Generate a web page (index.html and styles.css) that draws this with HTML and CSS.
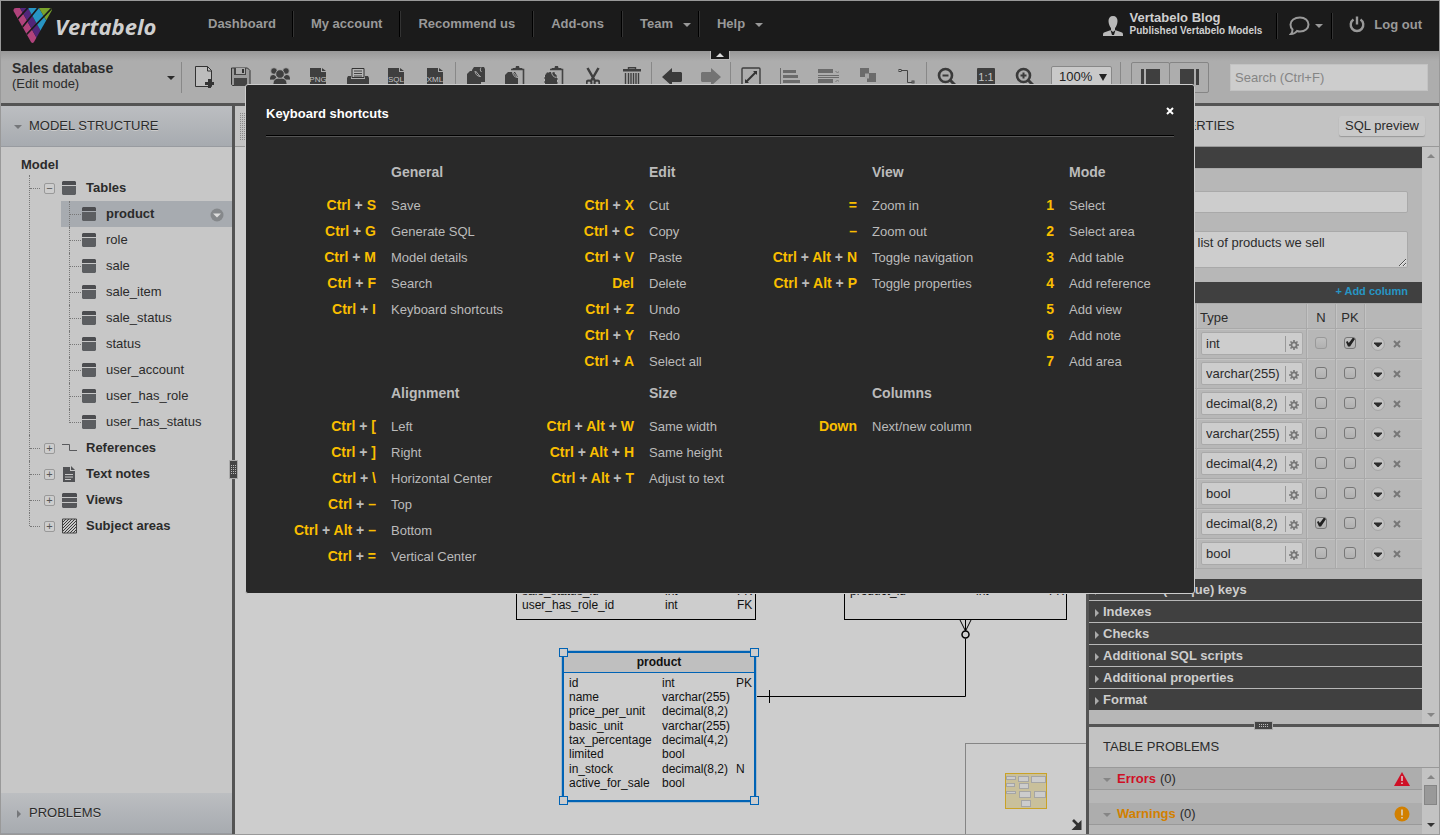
FILE: index.html
```html
<!DOCTYPE html>
<html lang="en">
<head>
<meta charset="utf-8">
<title>Sales database - Vertabelo</title>
<link rel="stylesheet" href="styles.css">
</head>
<body>
<svg class="defs" width="0" height="0" aria-hidden="true">
  <symbol id="i-table" viewBox="0 0 14 14"><path d="M1 0h12l1 1v3H0V1z" fill="#4c4d50"/><path d="M0 5h14v8l-1 1H1l-1-1z" fill="#5c5e61"/></symbol>
  <symbol id="i-gear" viewBox="0 0 10 10"><circle cx="5" cy="5" r="2.6" fill="none" stroke="#777" stroke-width="1.8"/><path d="M5 0v2M5 8v2M0 5h2M8 5h2M1.500 1.500l1.300 1.300M7.200 7.200l1.300 1.300M8.500 1.500L7.200 2.800M2.800 7.200L1.500 8.500" stroke="#777" stroke-width="1.600"/></symbol>
  <symbol id="i-x" viewBox="0 0 8 8"><path d="M1 1l6 6M7 1L1 7" stroke="currentColor" stroke-width="2"/></symbol>
  <symbol id="i-more" viewBox="0 0 14 14"><circle cx="7" cy="7" r="6.400" fill="#c3c3c3" stroke="#a2a2a2"/><path d="M3 5.500h8v1L7.500 10h-1L3 6.500z" fill="#2b2b2b"/></symbol>
</svg>

<div class="app">
  <header class="topbar">
    <a class="logo" href="#">
      <svg width="39" height="36" viewBox="0 0 39 36" aria-hidden="true">
        <clipPath id="v"><path d="M3 0h33q4 0 2.500 3L21 34q-1.500 2-3 0L.5 3Q0 0 3 0z"/></clipPath>
        <g clip-path="url(#v)">
          <path d="M-4 0H7l20 36H0z" fill="#b1437c"/>
          <path d="M7 0h8l20 36h-8z" fill="#52267a"/>
          <path d="M15 0h11l16 28v8h-7z" fill="#2795c4"/>
          <path d="M26 0h14v24z" fill="#79a32c"/>
          <path d="M16 -1.500L2 14M26.500 -2L7 22M39 0L13 27" stroke="#1b1b1b" stroke-width="1.700"/>
        </g>
      </svg>
      <span>Vertabelo</span>
    </a>
    <nav class="nav">
      <a href="#">Dashboard</a>
      <a href="#">My account</a>
      <a href="#">Recommend us</a>
      <a href="#">Add-ons</a>
      <a href="#" class="drop drop-tight">Team</a>
      <a href="#" class="drop">Help</a>
    </nav>
    <div class="account">
      <svg width="20" height="21" viewBox="0 0 20 21" aria-hidden="true"><path d="M10 0c3 0 4.500 2 4.500 5S13 11 12 12v2l7 2.500c1 .5 1 1.500 1 3.500H0c0-2 0-3 1-3.500L8 14v-2C7 11 5.500 8 5.500 5S7 0 10 0z" fill="#b9b9b9"/><path d="M7.500 14l2.500 2 2.500-2-1.500 5H9z" fill="#1b1b1b"/></svg>
      <div class="who"><strong>Vertabelo Blog</strong><small>Published Vertabelo Models</small></div>
    </div>
    <button class="chat" aria-label="Messages">
      <svg width="21" height="20" viewBox="0 0 21 20"><path d="M11 1.500c5 0 8.500 3 8.500 7s-3.500 7-8.500 7c-1 0-2-.1-3-.5-1.500 2-3.500 3-6 3 1.500-1.500 1.500-3 1.500-4.500C2 12 1.500 10.500 1.500 8.500c0-4 4-7 9.500-7z" fill="none" stroke="#999" stroke-width="2"/></svg>
      <i class="caret"></i>
    </button>
    <a class="logout" href="#">
      <svg width="16" height="17" viewBox="0 0 16 17" aria-hidden="true"><path d="M4.500 3.500a6.300 6.300 0 1 0 7 0M8 .5v8" fill="none" stroke="#999" stroke-width="2.400"/></svg>
      Log out
    </a>
    <button class="collapse" aria-label="Collapse header"><i></i></button>
  </header>

  <div class="toolbar">
    <button class="model"><span><strong>Sales database</strong>(Edit mode)</span><i class="caret dark"></i></button>
    <div class="group">
      <button aria-label="Add table"><svg class="new" width="20" height="24" viewBox="0 0 20 24"><path d="M.500 1.500h12l4 4v16H.500z" fill="#bdbdbd" stroke="#333"/><path d="M12.500 1.500V6h4" fill="none" stroke="#333"/><path d="M14.500 14v9M10 18.500h9" stroke="#333" stroke-width="3"/></svg></button>
      <button aria-label="Save"><svg width="20" height="20" viewBox="0 0 20 20"><path d="M1.500 1h15L19 3.500V18.500H1.500L.500 17.500V1z" fill="#9a9a9a" stroke="#333"/><path d="M3 1h12v7H3z" fill="#444"/><path d="M5 1h9v6H5z" fill="#aaa"/><path d="M11 2h2v4h-2z" fill="#333"/><path d="M3 11h13v8H3z" fill="#444"/></svg></button>
      <button aria-label="Share"><svg width="20" height="20" viewBox="0 0 20 20" fill="#3f3f3f" stroke="#adadad" stroke-width=".8"><circle cx="4" cy="4" r="3.300"/><circle cx="16" cy="4" r="3.300"/><path d="M-.5 13c0-4 1.500-5.500 4.500-5.500L7 10l-2 3zM20.500 13c0-4-1.500-5.500-4.500-5.500L13 10l2 3z"/><path d="M3 18c0-5 2-7 7-7s7 2 7 7z"/><circle cx="10" cy="7" r="4.300"/></svg></button>
      <button aria-label="Export PNG"><svg width="17" height="20" viewBox="0 0 17 20"><path d="M0 1h11v4h5v14H0zM12 1l4 3h-4z" fill="#3f3f3f"/><text x="8" y="15" class="fmt">PNG</text></svg></button>
      <button aria-label="Print"><svg width="22" height="20" viewBox="0 0 22 20"><path d="M5 1.500h12v9H5z" fill="#b5b5b5" stroke="#333"/><path d="M7 4h8M7 6.500h8M7 9h8" stroke="#444"/><path d="M1 9h3v3h14V9h3l1 2v7H0v-7z" fill="#3f3f3f"/></svg></button>
      <button aria-label="Generate SQL"><svg width="17" height="20" viewBox="0 0 17 20"><path d="M0 1h11v4h5v14H0zM12 1l4 3h-4z" fill="#3f3f3f"/><text x="8" y="15" class="fmt">SQL</text></svg></button>
      <button aria-label="Export XML"><svg width="17" height="20" viewBox="0 0 17 20"><path d="M0 1h11v4h5v14H0zM12 1l4 3h-4z" fill="#3f3f3f"/><text x="8" y="15" class="fmt">XML</text></svg></button>
    </div>
    <div class="group">
      <button aria-label="Copy"><svg width="20" height="22" viewBox="0 0 20 22"><path d="M6 4l2-3h10l1 2v13H6z" fill="#3f3f3f"/><path d="M1 8l3-3h8l3 5v11H1z" fill="#3f3f3f"/><path d="M9 5c.5 3 1.500 5 5.500 5.500M15 1.500c-1 2-1 3 .5 4.500M9.500 5l5 6" fill="none" stroke="#aaa"/></svg></button>
      <button aria-label="Paste"><svg width="20" height="22" viewBox="0 0 20 22"><path d="M6 3.500h12.500V20H13" fill="none" stroke="#444" stroke-width="1.600"/><path d="M7 3.500L8 2h2.500L11 0h3l.5 2H17l1 1.500z" fill="#3f3f3f"/><path d="M0 9l3-3h7l3 5v11H0z" fill="#3f3f3f"/><path d="M7.500 6c.5 3 1.500 5 5 5.500M8 6l5 6" fill="none" stroke="#aaa"/></svg></button>
      <button aria-label="Paste special"><svg width="20" height="22" viewBox="0 0 20 22"><path d="M6 3.500h12.500V20H14" fill="none" stroke="#444" stroke-width="1.600"/><path d="M7 3.500L8 2h2.500L11 0h3l.5 2H17l1 1.500z" fill="#3f3f3f"/><path d="M.5 9l3-3h7l3 5v11H.5z" fill="#3f3f3f" stroke="#bbb" stroke-dasharray="2 2"/><path d="M7.500 6c.5 3 1.500 5 5 5.500" fill="none" stroke="#aaa"/></svg></button>
      <button aria-label="Cut"><svg width="14" height="20" viewBox="0 0 14 20"><path d="M1.500 1L9 14M12.500 1L5 14" stroke="#3f3f3f" stroke-width="2.500"/><circle cx="3" cy="16" r="2.500" fill="none" stroke="#3f3f3f" stroke-width="2"/><circle cx="11" cy="16" r="2.500" fill="none" stroke="#3f3f3f" stroke-width="2"/></svg></button>
      <button aria-label="Delete"><svg width="18" height="20" viewBox="0 0 18 20"><path d="M5.500 2.500V.700h7v1.800M2.500 6v13h13V6M5.500 6v12M8 6v12M10.500 6v12M13 6v12" fill="none" stroke="#3f3f3f" stroke-width="1.400"/><path d="M0 2h18v2.500H0z" fill="#3f3f3f"/></svg></button>
    </div>
    <div class="group">
      <button aria-label="Undo"><svg width="20" height="18" viewBox="0 0 20 18"><path d="M0 9l10-9v4h9l1 1v8l-1 1h-9v4z" fill="#3a3a3a"/></svg></button>
      <button aria-label="Redo"><svg width="20" height="18" viewBox="0 0 20 18"><path d="M20 9L10 0v4H1L0 5v8l1 1h9v4z" fill="#737373"/></svg></button>
    </div>
    <div class="group">
      <button aria-label="Fit"><svg width="20" height="20" viewBox="0 0 20 20"><rect x="1" y="1" width="18" height="18" rx="1" fill="none" stroke="#3f3f3f" stroke-width="1.400"/><path d="M5 15L15 5" stroke="#333" stroke-width="2"/><path d="M16 4v4l-4-4zM4 16v-4l4 4z" fill="#333"/></svg></button>
      <button aria-label="Align"><svg width="20" height="20" viewBox="0 0 20 20" fill="#6b6b6b"><path d="M0 1h1v18H0zM3 3h13v3H3zM3 8h15v3H3zM3 13h17v3H3z"/></svg></button>
      <button aria-label="Size"><svg width="21" height="20" viewBox="0 0 21 20" fill="#6b6b6b"><path d="M0 2h15v4H0zM0 8h21v1H0zM0 10h21v1H0zM0 12h15v4H0z"/><path d="M17.500 4l2 2 2-2M17.500 15l2-2 2 2" fill="none" stroke="#777"/></svg></button>
      <button aria-label="Order"><svg width="17" height="20" viewBox="0 0 17 20"><path d="M1 1h9v9H1z" fill="#6b6b6b"/><path d="M8 6h9v9H8z" fill="#6b6b6b"/><path d="M6 6.500h4v5H6z" fill="#a5a5a5"/></svg></button>
      <button aria-label="Line style"><svg width="18" height="20" viewBox="0 0 18 20"><path d="M3 3.500h6.500v12H14" fill="none" stroke="#444"/><rect x="1" y="2.500" width="2" height="2" fill="none" stroke="#444"/><rect x="14" y="14" width="2" height="2" fill="none" stroke="#444"/></svg></button>
    </div>
    <div class="group">
      <button aria-label="Zoom out"><svg width="20" height="20" viewBox="0 0 20 20" fill="none" stroke="#3a3a3a"><circle cx="8.500" cy="8.500" r="6.500" stroke-width="2.600"/><path d="M13 13l6 6" stroke-width="3"/><path d="M5.500 8.500h6" stroke-width="2"/></svg></button>
      <button aria-label="Actual size"><svg width="20" height="20" viewBox="0 0 20 20"><rect x="1" y="1" width="18" height="18" rx="1" fill="#3f3f3f"/><text x="10" y="14" class="one">1:1</text></svg></button>
      <button aria-label="Zoom in"><svg width="20" height="20" viewBox="0 0 20 20" fill="none" stroke="#3a3a3a"><circle cx="8.500" cy="8.500" r="6.500" stroke-width="2.600"/><path d="M13 13l6 6" stroke-width="3"/><path d="M5.500 8.500h6M8.500 5.500v6" stroke-width="2"/></svg></button>
    </div>
    <div class="zoom-box"><select class="zoom" aria-label="Zoom"><option>100%</option></select><i></i></div>
    <div class="panels">
      <button aria-label="Toggle navigation"><svg width="19" height="16" viewBox="0 0 19 16" fill="#3f3f3f"><path d="M0 0h3v16H0zM5 0h14v16H5z"/></svg></button><button aria-label="Toggle properties"><svg width="19" height="16" viewBox="0 0 19 16" fill="#3f3f3f"><path d="M16 0h3v16h-3zM0 0h14v16H0z"/></svg></button>
    </div>
    <input class="search" type="search" placeholder="Search (Ctrl+F)" aria-label="Search">
  </div>

  <main class="workspace">
    <aside class="sidebar">
      <h2 class="side-head open">MODEL STRUCTURE</h2>
      <div class="tree">
        <div class="root">Model</div>
        <ul class="level1">
          <li>
            <div class="node"><button class="tog" aria-label="Collapse">&minus;</button><svg width="16" height="14" viewBox="0 0 16 14"><use href="#i-table" width="14" height="14"/></svg>Tables</div>
            <ul class="level2">
              <li class="sel"><svg width="14" height="14"><use href="#i-table"/></svg>product<svg class="pick" width="14" height="14" viewBox="0 0 14 14"><circle cx="7" cy="7" r="6.500" fill="#85888b"/><path d="M3 5.500h8L7 9.500z" fill="#ddd"/></svg></li>
              <li><svg width="14" height="14"><use href="#i-table"/></svg>role</li>
              <li><svg width="14" height="14"><use href="#i-table"/></svg>sale</li>
              <li><svg width="14" height="14"><use href="#i-table"/></svg>sale_item</li>
              <li><svg width="14" height="14"><use href="#i-table"/></svg>sale_status</li>
              <li><svg width="14" height="14"><use href="#i-table"/></svg>status</li>
              <li><svg width="14" height="14"><use href="#i-table"/></svg>user_account</li>
              <li><svg width="14" height="14"><use href="#i-table"/></svg>user_has_role</li>
              <li><svg width="14" height="14"><use href="#i-table"/></svg>user_has_status</li>
            </ul>
          </li>
          <li><div class="node"><button class="tog" aria-label="Expand">+</button><svg width="16" height="14" viewBox="0 0 16 14"><path d="M0 3.500h7.500v6H15" fill="none" stroke="#58595c"/></svg>References</div></li>
          <li><div class="node"><button class="tog" aria-label="Expand">+</button><svg width="16" height="16" viewBox="0 0 16 16"><path d="M1 1h7v4h5v11H1zM9 0l4 4H9z" fill="#515255"/><path d="M3 8.500h8M3 11h8M3 13.500h6" stroke="#c7c7c7"/></svg>Text notes</div></li>
          <li><div class="node"><button class="tog" aria-label="Expand">+</button><svg width="16" height="16" viewBox="0 0 16 16"><path d="M1 1h13l1 1v3H0V2z" fill="#4c4d50"/><path d="M0 6h15v4H0zM0 11h15v4l-1 1H1l-1-1z" fill="#56575a"/></svg>Views</div></li>
          <li><div class="node"><button class="tog" aria-label="Expand">+</button><svg width="16" height="16" viewBox="0 0 16 16"><path d="M1 4l3-3M1 7l6-6M1 10l9-9M1 13l12-12M2 15L15 2M5 15L15 5M8 15l7-7M11 15l4-4M14 15l1-1" stroke="#3a3a3a"/><path d="M.500 1h14v14H.500z" fill="none" stroke="#444"/></svg>Subject areas</div></li>
        </ul>
      </div>
      <h2 class="side-head">PROBLEMS</h2>
    </aside>
    <div class="split"><i></i></div>

    <section class="canvas">
      <div class="canvas-bar"><i class="grip"></i></div>
      <div class="diagram">
        <svg class="links" width="851" height="687" viewBox="0 0 851 687" fill="none" stroke="#000" aria-hidden="true">
          <path d="M520 549.500h210.500V491.500M534.500 543v13M730.500 473v10M725 473l5.500 11L736 473"/><circle cx="730.500" cy="487.500" r="3.500" stroke-width="1.500"/>
        </svg>
        <div class="entity e-sale">
          <table><tr><td>sale_status_id</td><td>int</td><td>FK</td></tr><tr><td>user_has_role_id</td><td>int</td><td>FK</td></tr></table>
        </div>
        <div class="entity e-item">
          <table><tr><td>product_id</td><td>int</td><td>FK</td></tr></table>
        </div>
        <div class="entity e-product">
          <h3>product</h3>
          <table>
            <tr><td>id</td><td>int</td><td>PK</td></tr>
            <tr><td>name</td><td>varchar(255)</td><td></td></tr>
            <tr><td>price_per_unit</td><td>decimal(8,2)</td><td></td></tr>
            <tr><td>basic_unit</td><td>varchar(255)</td><td></td></tr>
            <tr><td>tax_percentage</td><td>decimal(4,2)</td><td></td></tr>
            <tr><td>limited</td><td>bool</td><td></td></tr>
            <tr><td>in_stock</td><td>decimal(8,2)</td><td>N</td></tr>
            <tr><td>active_for_sale</td><td>bool</td><td></td></tr>
          </table>
          <i class="h tl"></i><i class="h tr"></i><i class="h bl"></i><i class="h br"></i>
        </div>
        <div class="minimap">
          <svg width="120" height="90" viewBox="0 0 120 90">
            <rect x="39.500" y="29.500" width="41" height="35" fill="#c9c09b" stroke="#c9a227"/>
            <g fill="#ccc" stroke="#a5a5a5"><rect x="40.500" y="32.500" width="9" height="3"/><rect x="52.500" y="32.500" width="10" height="5"/><rect x="65.500" y="32.500" width="14" height="6"/><rect x="40.500" y="39.500" width="8" height="3"/><rect x="53.500" y="39.500" width="9" height="5"/><rect x="40.500" y="47.500" width="9" height="2"/><rect x="53.500" y="47.500" width="11" height="6"/><rect x="68.500" y="47.500" width="11" height="6"/><rect x="55.500" y="56.500" width="9" height="6"/></g>
            <path d="M107 76l6 6" stroke="#333" stroke-width="2.600"/><path d="M115.500 76v10h-10z" fill="#333"/>
          </svg>
        </div>
      </div>
    </section>
    <div class="split"><i></i></div>

    <aside class="props">
      <div class="props-head"><h2>TABLE PROPERTIES</h2><button>SQL preview</button></div>
      <div class="scroller props-scroll">
        <div class="props-body">
          <div class="bar"></div>
          <div class="fields">
            <input type="text" aria-label="Name">
            <textarea aria-label="Description">The whole list of products we sell</textarea>
          </div>
          <div class="bar"><button class="add">+ Add column</button></div>
          <table class="cols">
            <colgroup><col><col class="c-type"><col class="c-box"><col class="c-box"><col class="c-act"></colgroup>
            <thead><tr><th></th><th class="left">Type</th><th>N</th><th>PK</th><th></th></tr></thead>
            <tbody>
              <tr><td></td><td><span class="type"><input value="int" aria-label="Type"><svg><use href="#i-gear"/></svg></span></td><td><input type="checkbox" disabled aria-label="N"></td><td><input type="checkbox" checked aria-label="PK"></td><td><span class="acts"><svg width="14" height="14"><use href="#i-more"/></svg><svg width="8" height="8"><use href="#i-x"/></svg></span></td></tr>
              <tr><td></td><td><span class="type"><input value="varchar(255)" aria-label="Type"><svg><use href="#i-gear"/></svg></span></td><td><input type="checkbox" aria-label="N"></td><td><input type="checkbox" aria-label="PK"></td><td><span class="acts"><svg width="14" height="14"><use href="#i-more"/></svg><svg width="8" height="8"><use href="#i-x"/></svg></span></td></tr>
              <tr><td></td><td><span class="type"><input value="decimal(8,2)" aria-label="Type"><svg><use href="#i-gear"/></svg></span></td><td><input type="checkbox" aria-label="N"></td><td><input type="checkbox" aria-label="PK"></td><td><span class="acts"><svg width="14" height="14"><use href="#i-more"/></svg><svg width="8" height="8"><use href="#i-x"/></svg></span></td></tr>
              <tr><td></td><td><span class="type"><input value="varchar(255)" aria-label="Type"><svg><use href="#i-gear"/></svg></span></td><td><input type="checkbox" aria-label="N"></td><td><input type="checkbox" aria-label="PK"></td><td><span class="acts"><svg width="14" height="14"><use href="#i-more"/></svg><svg width="8" height="8"><use href="#i-x"/></svg></span></td></tr>
              <tr><td></td><td><span class="type"><input value="decimal(4,2)" aria-label="Type"><svg><use href="#i-gear"/></svg></span></td><td><input type="checkbox" aria-label="N"></td><td><input type="checkbox" aria-label="PK"></td><td><span class="acts"><svg width="14" height="14"><use href="#i-more"/></svg><svg width="8" height="8"><use href="#i-x"/></svg></span></td></tr>
              <tr><td></td><td><span class="type"><input value="bool" aria-label="Type"><svg><use href="#i-gear"/></svg></span></td><td><input type="checkbox" aria-label="N"></td><td><input type="checkbox" aria-label="PK"></td><td><span class="acts"><svg width="14" height="14"><use href="#i-more"/></svg><svg width="8" height="8"><use href="#i-x"/></svg></span></td></tr>
              <tr><td></td><td><span class="type"><input value="decimal(8,2)" aria-label="Type"><svg><use href="#i-gear"/></svg></span></td><td><input type="checkbox" checked aria-label="N"></td><td><input type="checkbox" aria-label="PK"></td><td><span class="acts"><svg width="14" height="14"><use href="#i-more"/></svg><svg width="8" height="8"><use href="#i-x"/></svg></span></td></tr>
              <tr><td></td><td><span class="type"><input value="bool" aria-label="Type"><svg><use href="#i-gear"/></svg></span></td><td><input type="checkbox" aria-label="N"></td><td><input type="checkbox" aria-label="PK"></td><td><span class="acts"><svg width="14" height="14"><use href="#i-more"/></svg><svg width="8" height="8"><use href="#i-x"/></svg></span></td></tr>
            </tbody>
          </table>
          <div class="sections">
            <button>Alternate (unique) keys</button>
            <button>Indexes</button>
            <button>Checks</button>
            <button>Additional SQL scripts</button>
            <button>Additional properties</button>
            <button>Format</button>
          </div>
        </div>
        <div class="sbar"><i class="up"></i><i class="down"></i></div>
      </div>
      <div class="hsplit"><i></i></div>
      <div class="probs">
        <div class="probs-head"><h2>TABLE PROBLEMS</h2></div>
        <div class="scroller">
          <div class="probs-body">
            <div class="prob"><strong class="err">Errors</strong> (0)
              <svg width="16" height="14" viewBox="0 0 16 14"><path d="M8 0l8 14H0z" fill="#cf1026"/><path d="M8 4v5M8 10.500v1.500" stroke="#ddd" stroke-width="1.400"/></svg></div>
            <div class="prob"><strong class="warn">Warnings</strong> (0)
              <svg width="16" height="16" viewBox="0 0 16 16"><circle cx="8" cy="8" r="7.500" fill="#d28000"/><path d="M8 3.500v6M8 11v1.500" stroke="#ddd" stroke-width="1.400"/></svg></div>
          </div>
          <div class="sbar"><i class="up"></i><b></b><i class="down on"></i></div>
        </div>
      </div>
    </aside>
  </main>
</div>

<div class="overlay">
  <div class="modal" role="dialog" aria-labelledby="mt">
    <header><h1 id="mt">Keyboard shortcuts</h1><button aria-label="Close"><svg width="8" height="8"><use href="#i-x"/></svg></button></header>
    <div class="keys">
      <section><h2>General</h2><dl>
        <dt><kbd>Ctrl</kbd> + <kbd>S</kbd></dt><dd>Save</dd>
        <dt><kbd>Ctrl</kbd> + <kbd>G</kbd></dt><dd>Generate SQL</dd>
        <dt><kbd>Ctrl</kbd> + <kbd>M</kbd></dt><dd>Model details</dd>
        <dt><kbd>Ctrl</kbd> + <kbd>F</kbd></dt><dd>Search</dd>
        <dt><kbd>Ctrl</kbd> + <kbd>I</kbd></dt><dd>Keyboard shortcuts</dd>
      </dl></section>
      <section><h2>Edit</h2><dl>
        <dt><kbd>Ctrl</kbd> + <kbd>X</kbd></dt><dd>Cut</dd>
        <dt><kbd>Ctrl</kbd> + <kbd>C</kbd></dt><dd>Copy</dd>
        <dt><kbd>Ctrl</kbd> + <kbd>V</kbd></dt><dd>Paste</dd>
        <dt><kbd>Del</kbd></dt><dd>Delete</dd>
        <dt><kbd>Ctrl</kbd> + <kbd>Z</kbd></dt><dd>Undo</dd>
        <dt><kbd>Ctrl</kbd> + <kbd>Y</kbd></dt><dd>Redo</dd>
        <dt><kbd>Ctrl</kbd> + <kbd>A</kbd></dt><dd>Select all</dd>
      </dl></section>
      <section><h2>View</h2><dl>
        <dt><kbd>=</kbd></dt><dd>Zoom in</dd>
        <dt><kbd>–</kbd></dt><dd>Zoom out</dd>
        <dt><kbd>Ctrl</kbd> + <kbd>Alt</kbd> + <kbd>N</kbd></dt><dd>Toggle navigation</dd>
        <dt><kbd>Ctrl</kbd> + <kbd>Alt</kbd> + <kbd>P</kbd></dt><dd>Toggle properties</dd>
      </dl></section>
      <section><h2>Mode</h2><dl>
        <dt><kbd>1</kbd></dt><dd>Select</dd>
        <dt><kbd>2</kbd></dt><dd>Select area</dd>
        <dt><kbd>3</kbd></dt><dd>Add table</dd>
        <dt><kbd>4</kbd></dt><dd>Add reference</dd>
        <dt><kbd>5</kbd></dt><dd>Add view</dd>
        <dt><kbd>6</kbd></dt><dd>Add note</dd>
        <dt><kbd>7</kbd></dt><dd>Add area</dd>
      </dl></section>
      <section><h2>Alignment</h2><dl>
        <dt><kbd>Ctrl</kbd> + <kbd>[</kbd></dt><dd>Left</dd>
        <dt><kbd>Ctrl</kbd> + <kbd>]</kbd></dt><dd>Right</dd>
        <dt><kbd>Ctrl</kbd> + <kbd>\</kbd></dt><dd>Horizontal Center</dd>
        <dt><kbd>Ctrl</kbd> + <kbd>–</kbd></dt><dd>Top</dd>
        <dt><kbd>Ctrl</kbd> + <kbd>Alt</kbd> + <kbd>–</kbd></dt><dd>Bottom</dd>
        <dt><kbd>Ctrl</kbd> + <kbd>=</kbd></dt><dd>Vertical Center</dd>
      </dl></section>
      <section><h2>Size</h2><dl>
        <dt><kbd>Ctrl</kbd> + <kbd>Alt</kbd> + <kbd>W</kbd></dt><dd>Same width</dd>
        <dt><kbd>Ctrl</kbd> + <kbd>Alt</kbd> + <kbd>H</kbd></dt><dd>Same height</dd>
        <dt><kbd>Ctrl</kbd> + <kbd>Alt</kbd> + <kbd>T</kbd></dt><dd>Adjust to text</dd>
      </dl></section>
      <section><h2>Columns</h2><dl>
        <dt><kbd>Down</kbd></dt><dd>Next/new column</dd>
      </dl></section>
    </div>
  </div>
</div>
</body>
</html>
```
FILE: styles.css
```css
* { box-sizing: border-box; }
body { margin: 0; font: 13px/16px "Liberation Sans", Arial, sans-serif; color: #2b2b2b; background: #cdcdcd; }
button, input, select, textarea { font: inherit; color: inherit; margin: 0; }
button { background: none; border: 0; padding: 0; }
h1, h2, h3, ul, dl, dd { margin: 0; padding: 0; font-size: 13px; }
ul { list-style: none; }
a { color: inherit; text-decoration: none; }
svg { display: block; flex: none; }
.defs { position: absolute; }

.app { height: 100vh; display: flex; flex-direction: column; border: 1px solid #999; overflow: hidden; }

/* Top bar */
.topbar { position: relative; flex: none; height: 50px; display: flex; align-items: center; background: #1b1b1b; color: #999; font-weight: bold; }
.logo { width: 179px; padding-left: 12px; display: flex; align-items: center; gap: 3px; font: italic bold 22px/36px "Open Sans", sans-serif; color: #cfcfcf; }
.nav { display: flex; padding-bottom: 4px; }
.nav a { line-height: 16px; padding: 5px 18px 5px 16px; box-shadow: inset -1px 0 #000; display: flex; align-items: center; border-right: 1px solid #333; height: 26px; }
.nav a + a { padding-left: 17px; }
.nav a:first-child { padding-left: 28px; padding-right: 17px; }
.nav a:last-child { border: 0; box-shadow: none; }
.nav .drop::after { content: ""; margin: 2px 0 0 10px; border: 4px solid transparent; border-top-color: #999; border-bottom: 0; }
.nav .drop-tight { padding-right: 8px; }
.caret { border: 4px solid transparent; border-top-color: #999; border-bottom: 0; }
.caret.dark { border-top-color: #2b2b2b; }
.account { margin-left: auto; display: flex; align-items: center; gap: 7px; padding-right: 14px; }
.who { display: flex; flex-direction: column; color: #cfcfcf; padding-bottom: 5px; }
.who strong { line-height: 15px; }
.who small { font-size: 10px; line-height: 12px; }
.chat { height: 26px; display: flex; align-items: center; gap: 5px; padding: 0 8px 0 12px; border-left: 1px solid #000; border-right: 1px solid #000; box-shadow: inset 1px 0 #333, 1px 0 #333; }
.logout { display: flex; align-items: center; gap: 9px; padding: 0 17px 3px; }
.collapse { position: absolute; z-index: 1; top: 50px; left: 50%; width: 20px; height: 9px; margin-left: -10px; background: #1b1b1b; border: solid #bbb; border-width: 0 1px 1px; display: flex; justify-content: center; align-items: center; }
.collapse i { border: 4px solid transparent; border-bottom-color: #ddd; border-top: 0; }

/* Tool bar */
.toolbar { flex: none; height: 55px; display: flex; align-items: center; background: linear-gradient(#989898, #adadad 10px); border-bottom: 3px solid #545454; }
.model { width: 180px; padding: 0 6px 2px 11px; display: flex; justify-content: space-between; align-items: center; text-align: left; }
.model span { line-height: 15px; }
.model strong { display: block; font-size: 14px; }
.model .caret { margin-top: 4px; }
.group { display: flex; border-left: 1px solid #888; height: 31px; }
.group button { width: 39px; display: flex; justify-content: center; align-items: center; }
.group .new { margin-left: 6px; }
.fmt, .one { font: 8px/8px "Liberation Sans Narrow", "Liberation Sans", sans-serif; fill: #c3c3c3; text-anchor: middle; }
.one { font-size: 11px; }
.zoom-box { position: relative; margin-left: 7px; }
.zoom-box i { position: absolute; right: 5px; top: 8px; border: 4px solid transparent; border-top: 7px solid #222; border-bottom: 0; pointer-events: none; }
.zoom { appearance: none; display: block; width: 61px; height: 22px; padding: 0 7px; border: 1px solid #888; border-radius: 2px; background: #c9c9c9; color: #222; }
.panels { display: flex; margin-left: 8px; padding-left: 10px; border-left: 1px solid #888; }
.panels button { width: 39px; height: 31px; border: 1px solid #858585; border-radius: 2px; display: flex; align-items: center; justify-content: center; }
.panels button + button { margin-left: -1px; width: 40px; }
.search { appearance: none; width: 198px; height: 27px; margin: 0 11px 0 auto; padding: 0 4px; border: 1px solid #c3c3c3; background: #cdcdcd; }
.search::placeholder { color: #858585; opacity: 1; }

/* Workspace */
.workspace { flex: 1; min-height: 0; display: flex; }
.split { position: relative; flex: none; width: 3px; background: #545454; }
.split i, .hsplit i { position: absolute; background: repeating-linear-gradient(#454545 0 1px, transparent 1px 2px) content-box, repeating-linear-gradient(90deg, #bbb 0 1px, #454545 1px 2px) content-box, #454545; outline: 1px solid #aaa; }
.split i { top: 50%; left: -2px; width: 7px; height: 17px; margin-top: -9px; padding: 3px 1px 3px 1px; }

.sidebar { flex: none; width: 231px; display: flex; flex-direction: column; background: #c7c7c7; }
.side-head { height: 41px; padding-left: 28px; display: flex; align-items: center; font-weight: normal; color: #2b2b2b; background: linear-gradient(#bcbec1, #a7abb0); border-bottom: 1px solid #989ba0; position: relative; text-shadow: 0 1px #ccc; }
.side-head::before { content: ""; position: absolute; left: 16px; top: 17px; border: 4px solid transparent; border-left-color: #75777a; border-right: 0; }
.side-head.open::before { left: 13px; top: 19px; border: 4px solid transparent; border-top-color: #75777a; border-bottom: 0; }
.tree { flex: 1; padding-top: 5px; overflow: hidden; }
.root { height: 23px; line-height: 26px; padding-left: 20px; font-weight: bold; }
.level1 { margin-left: 28px; }
.level1 > li { position: relative; border-left: 1px dotted #777; }
.level1 > li:last-child { border-color: transparent; }
.level1 > li:last-child::before { content: ""; position: absolute; left: -1px; top: 0; height: 13px; border-left: 1px dotted #777; }
.node { height: 26px; display: flex; align-items: center; gap: 8px; font-weight: bold; }
.node::before { content: ""; width: 10px; margin-right: -4px; border-top: 1px dotted #777; }
.tog { width: 11px; height: 11px; border: 1px solid #999; border-radius: 2px; background: #cdcdcd; color: #555; font: 11px/9px "Liberation Sans", sans-serif; margin-right: -1px; }
.level2 { margin-left: 31px; }
.level2 li { position: relative; height: 26px; display: flex; align-items: center; gap: 10px; padding-left: 21px; }
.level2 li::before { content: ""; position: absolute; left: 8px; top: 0; width: 11px; height: 13px; border: dotted #777; border-width: 0 0 1px 1px; }
.level2 li:not(:last-child)::after { content: ""; position: absolute; left: 8px; top: 13px; height: 13px; border-left: 1px dotted #777; }
.level2 .sel { background: #a7abb0; font-weight: bold; }
.pick { margin: 2px 8px 0 auto; }

/* Canvas */
.canvas { flex: 1; min-width: 0; display: flex; flex-direction: column; background: #cdcdcd; }
.canvas-bar { flex: none; height: 41px; background: #c3c3c3; border-bottom: 1px solid #999; padding: 6px 5px; }
.grip { display: block; width: 5px; height: 28px; background: repeating-linear-gradient(#c3c3c3 0 1px, transparent 1px 2px), repeating-linear-gradient(90deg, #888 0 1px, #c3c3c3 1px 2px); }
.diagram { flex: 1; position: relative; overflow: hidden; }
.links { position: absolute; left: 0; top: 0; }
.entity { position: absolute; border: 1px solid #000; font-size: 12px; line-height: 14px; color: #111; }
.entity table { border-collapse: collapse; table-layout: fixed; width: 100%; }
.entity td { padding: 0; white-space: nowrap; }
.e-sale { left: 281px; top: 435px; width: 240px; padding: 1px 2px 7px 5px; }
.e-sale td:first-child { width: 143px; }
.e-sale td:nth-child(2) { width: 72px; }
.e-item { left: 609px; top: 435px; width: 223px; padding: 1px 2px 21px 5px; }
.e-item td:first-child { width: 126px; }
.e-item td:nth-child(2) { width: 73px; }
.e-product { left: 327px; top: 504px; width: 194px; border: 2px solid #0063b5; padding-bottom: 10px; box-shadow: 0 0 0 1px #a3b8c9; }
.e-product h3 { line-height: 19px; font-size: 12px; text-align: center; background: #bfbfbf; border-bottom: 1px solid #0063b5; }
.e-product table { margin: 3px 0 0 5px; width: 185px; }
.e-product td:first-child { width: 93px; }
.e-product td:nth-child(2) { width: 74px; }
.e-product tr:nth-child(3n) td { line-height: 15px; }
.h { position: absolute; width: 9px; height: 9px; border: 1px solid #0063b5; background: #cdcdcd; }
.tl, .tr { top: -5px; }
.bl, .br { bottom: -5px; }
.tl, .bl { left: -5px; }
.tr, .br { right: -5px; }
.minimap { position: absolute; right: 0; bottom: 0; border: 1px solid #858585; border-width: 1px 0 0 1px; background: #cdcdcd; }

/* Properties */
.props { flex: none; width: 350px; display: flex; flex-direction: column; background: #b7b7b7; min-height: 0; }
.props h2 { font-weight: normal; }
.props-head { flex: none; height: 41px; padding: 0 14px 1px 18px; display: flex; align-items: center; justify-content: space-between; background: #c3c3c3; border-bottom: 1px solid #999; }
.props-head button { height: 20px; padding: 0 6px; background: #c9c9c9; border-radius: 2px; box-shadow: 0 1px 1px #999; }
.scroller { display: flex; flex: 1; min-height: 0; overflow: hidden; }
.props-body, .probs-body { flex: 1; min-width: 0; }
.bar { height: 22px; padding-right: 14px; display: flex; justify-content: flex-end; align-items: center; background: #404040; border-bottom: 1px solid #aaa; }
.add { color: #2795c4; font-size: 11px; font-weight: bold; padding-bottom: 3px; }
.fields { padding: 22px 14px 14px; display: flex; flex-direction: column; gap: 18px; }
.fields input { height: 22px; }
.fields input, .fields textarea { width: 100%; border: 1px solid #a9a9a9; border-radius: 2px; background: #cdcdcd; padding: 3px 5px; }
.fields textarea { height: 37px; padding-left: 30px; }
.cols { width: 100%; table-layout: fixed; border-collapse: separate; border-spacing: 0; }
.c-type { width: 110px; }
.c-box { width: 29px; }
.c-act { width: 57px; }
.cols th { height: 25px; font-weight: normal; padding: 3px 0 0; }
.cols .left { text-align: left; padding-left: 3px; }
.cols td { height: 30px; padding: 0; text-align: center; }
.cols th, .cols td { border-bottom: 1px solid #a9a9a9; box-shadow: inset 1px 1px #c3c3c3; border-right: 1px solid #a9a9a9; }
.cols th { box-shadow: inset 1px 0 #c3c3c3; }
.cols th:last-child, .cols td:last-child { border-right: 0; }
.type { margin: 0 3px 0 4px; height: 23px; display: flex; align-items: center; background: #cdcdcd; border: 1px solid #a9a9a9; border-radius: 2px; }
.type input { flex: 1; width: 0; height: 16px; border: 0; border-right: 1px solid #999; padding: 0 0 0 4px; background: none; }
.type svg { width: 10px; height: 10px; margin: 2px 3px 0; }
input[type=checkbox] { appearance: none; display: block; width: 12px; height: 12px; margin: 0 auto 2px; border: 1px solid #777; border-radius: 3px; background: linear-gradient(#bfbfbf, #b0b0b0); }
input[type=checkbox]:disabled { border-color: #999; }
input[type=checkbox]:checked::before { content: ""; display: block; height: 10px; background: #222; clip-path: polygon(10% 45%, 25% 35%, 38% 55%, 80% 0, 100% 15%, 50% 90%, 30% 90%); }
.acts { display: flex; align-items: center; gap: 8px; padding: 1px 0 0 6px; color: #777; }
.sections { margin-top: 10px; }
.sections button { display: flex; align-items: center; gap: 4px; width: 100%; height: 22px; padding-left: 6px; background: #404040; color: #cdcdcd; font-weight: bold; border-bottom: 1px solid #b7b7b7; }
.sections button::before { content: ""; margin-top: 2px; border: 4px solid transparent; border-left-color: #aaa; border-right: 0; }
.sbar { flex: none; width: 17px; background: #c3c3c3; display: flex; flex-direction: column; align-items: center; padding: 7px 0; }
.sbar i { border: 4px solid transparent; }
.sbar .up { border-bottom-color: #858585; border-top: 0; }
.sbar .down { border-top-color: #858585; border-bottom: 0; margin-top: auto; }
.sbar .down.on { border-top-color: #333; }
.sbar b { width: 13px; height: 20px; margin-top: 6px; background: #999; border: 1px solid #858585; }
.hsplit { position: relative; flex: none; height: 3px; background: #545454; }
.hsplit i { left: 50%; top: -2px; width: 17px; height: 7px; margin-left: -9px; padding: 1px 4px; }
.probs { flex: none; height: 107px; display: flex; flex-direction: column; }
.probs-head { flex: none; height: 41px; padding: 12px 14px; background: #c3c3c3; border-bottom: 1px solid #999; }
.prob { position: relative; height: 22px; margin-bottom: 13px; padding: 0 12px 0 28px; display: flex; align-items: center; gap: 4px; background: #adadad; border-bottom: 1px solid #999; }
.prob::before { content: ""; position: absolute; left: 14px; top: 10px; border: 4px solid transparent; border-top-color: #858585; border-bottom: 0; }
.prob svg { margin-left: auto; }
.err { color: #cf1026; }
.warn { color: #d28000; }

/* Shortcut dialog */
.overlay { position: fixed; inset: 0; display: flex; justify-content: center; align-items: flex-start; padding-top: 84px; }
.modal { width: 950px; padding: 0 20px 24px; background: #292929; border: 1px solid #cdcdcd; border-radius: 3px; color: #bbb; }
.modal header { display: flex; justify-content: space-between; padding: 21px 0 13px; border-bottom: 1px solid #000; box-shadow: 0 1px #555; margin-bottom: 23px; color: #fff; }
.modal header button { height: 10px; display: flex; align-items: center; }
.keys { display: grid; grid-template-columns: 258px 223px 197px 1fr; row-gap: 6px; }
.keys h2 { margin: 0 0 7px 125px; font-size: 14px; line-height: 26px; }
.keys dl { display: grid; grid-template-columns: 110px 1fr; column-gap: 15px; line-height: 26px; }
.keys dt { text-align: right; font-size: 14px; font-weight: bold; }
.keys dd { height: 26px; line-height: 28px; white-space: nowrap; }
.keys kbd { font: inherit; color: #f9be00; }
```
